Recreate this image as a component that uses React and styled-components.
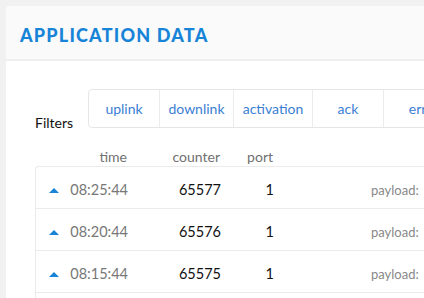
import React from "react";
import styled, { createGlobalStyle } from "styled-components";

const GlobalStyle = createGlobalStyle`
  html, body {
    margin: 0;
    padding: 0;
    background: #f1f1f1;
    font-family: Lato, "Liberation Sans", sans-serif;
    overflow: hidden;
  }
`;

const filters = ["uplink", "downlink", "activation", "ack", "error"];
const tabWidths = [70, 73, 78, 70, 80];

const rows = [
  { time: "08:25:44", counter: "65577", port: "1" },
  { time: "08:20:44", counter: "65576", port: "1" },
  { time: "08:15:44", counter: "65575", port: "1" },
  { time: "08:10:44", counter: "65574", port: "1" },
];

const App = () => {
  return (
    <Page>
      <GlobalStyle />
      <Card>
        <Header>
          <Title>APPLICATION DATA</Title>
        </Header>
        <Body>
          <FilterRow>
            <FilterLabel>Filters</FilterLabel>
            <Tabs>
              {filters.map((f, i) => (
                <Tab key={f} $w={tabWidths[i]}>{f}</Tab>
              ))}
            </Tabs>
          </FilterRow>

          <Columns>
            <span />
            <ColHead>time</ColHead>
            <ColHead>counter</ColHead>
            <ColHead>port</ColHead>
          </Columns>

          <Table>
            {rows.map((r) => (
              <Row key={r.counter}>
                <Arrow />
                <Time>{r.time}</Time>
                <Value>{r.counter}</Value>
                <Value>{r.port}</Value>
                <span />
                <Payload>payload:</Payload>
              </Row>
            ))}
          </Table>
        </Body>
      </Card>
    </Page>
  );
};

const Page = styled.div`
  width: 424px;
  height: 298px;
  padding: 6px 0 0 6px;
  box-sizing: border-box;
  overflow: hidden;
`;

const Card = styled.div`
  width: 460px;
  background: #fff;
  border-radius: 4px 0 0 0;
  overflow: hidden;
`;

const Header = styled.div`
  height: 53px;
  background: #fafafa;
  border-bottom: 2px solid #efefef;
  display: flex;
  align-items: center;
  padding-left: 14px;
`;

const Title = styled.h2`
  margin: 0;
  padding-top: 4px;
  font-family: Lato, "Liberation Sans", sans-serif;
  font-weight: 900;
  font-size: 18px;
  letter-spacing: 1.2px;
  color: #1784d8;
`;

const Body = styled.div`
  padding: 28px 0 0 29px;
`;

const FilterRow = styled.div`
  display: flex;
  align-items: flex-end;
`;

const FilterLabel = styled.span`
  font-size: 14px;
  color: #111;
  width: 53px;
  line-height: 17px;
  margin-bottom: -3px;
`;

const Tabs = styled.div`
  display: flex;
  height: 39px;
  border: 1px solid #e6e6e6;
  border-radius: 4px;
  box-sizing: border-box;
`;

const Tab = styled.div`
  width: ${(p) => p.$w}px;
  display: flex;
  align-items: center;
  justify-content: center;
  font-size: 14px;
  color: #3a7ed4;
  border-left: 1px solid #ececec;
  flex-shrink: 0;
  &:first-child {
    border-left: none;
  }
`;

const grid = `
  display: grid;
  grid-template-columns: 10px 69px 93px 53px 97px 60px;
  padding-left: 13px;
`;

const Columns = styled.div`
  ${grid}
  height: 38px;
  box-sizing: border-box;
  align-items: end;
  padding-bottom: 1px;
`;

const ColHead = styled.span`
  text-align: right;
  font-size: 14px;
  color: #707070;
`;

const Table = styled.div`
  border: 1px solid #ebebeb;
  border-right: none;
  border-bottom: none;
  border-radius: 4px 0 0 0;
`;

const Row = styled.div`
  ${grid}
  align-items: center;
  height: 42px;
  box-sizing: border-box;
  padding-top: 4px;
  border-bottom: 1px solid #ebebeb;
`;

const Arrow = styled.span`
  width: 0;
  height: 0;
  border-left: 5px solid transparent;
  border-right: 5px solid transparent;
  border-bottom: 5px solid #1784d8;
  margin-top: 1px;
`;

const Time = styled.span`
  text-align: right;
  font-size: 14.5px;
  color: #777;
`;

const Value = styled.span`
  text-align: right;
  font-size: 14.5px;
  color: #111;
`;

const Payload = styled.span`
  font-size: 13px;
  color: #888;
`;

export default App;
